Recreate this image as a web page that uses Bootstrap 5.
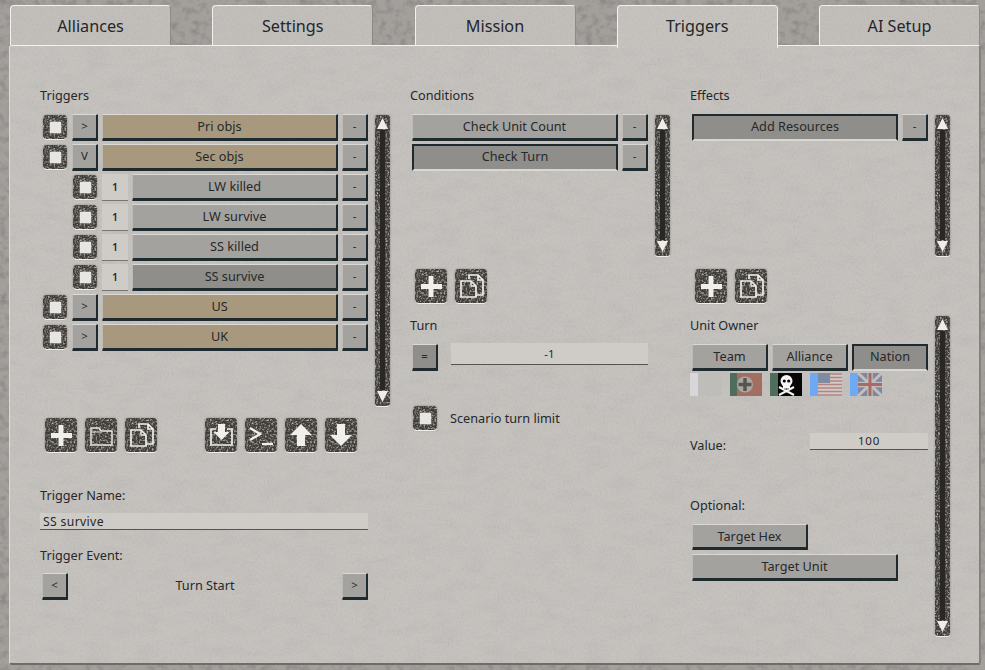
<!DOCTYPE html>
<html lang="en"><head><meta charset="utf-8"><title>Triggers</title>
<link href="https://cdn.jsdelivr.net/npm/bootstrap@5.3.0/dist/css/bootstrap.min.css" rel="stylesheet">
<style>
:root{
--noise:url("data:image/svg+xml,%3Csvg xmlns='http://www.w3.org/2000/svg' width='500' height='400'%3E%3Cfilter id='n'%3E%3CfeTurbulence type='fractalNoise' baseFrequency='.04 .09' numOctaves='5' seed='4'/%3E%3CfeColorMatrix values='0 0 0 0 .35 0 0 0 0 .34 0 0 0 0 .33 .3 0 0 0 -.12'/%3E%3C/filter%3E%3Crect width='500' height='400' filter='url(%23n)'/%3E%3C/svg%3E");
--grain:url("data:image/svg+xml,%3Csvg xmlns='http://www.w3.org/2000/svg' width='300' height='300'%3E%3Cfilter id='n'%3E%3CfeTurbulence type='fractalNoise' baseFrequency='.5' numOctaves='3' seed='9'/%3E%3CfeColorMatrix values='0 0 0 0 .3 0 0 0 0 .3 0 0 0 0 .3 .45 0 0 0 -.19'/%3E%3C/filter%3E%3Crect width='300' height='300' filter='url(%23n)'/%3E%3C/svg%3E");
--rough:url("data:image/svg+xml,%3Csvg xmlns='http://www.w3.org/2000/svg' width='300' height='300'%3E%3Cfilter id='n'%3E%3CfeTurbulence type='fractalNoise' baseFrequency='.14' numOctaves='4' seed='5'/%3E%3CfeColorMatrix values='0 0 0 0 .25 0 0 0 0 .24 0 0 0 0 .23 2 0 0 0 -.85'/%3E%3C/filter%3E%3Crect width='300' height='300' filter='url(%23n)'/%3E%3C/svg%3E");
--metal:url("data:image/svg+xml,%3Csvg xmlns='http://www.w3.org/2000/svg' width='120' height='120'%3E%3Cfilter id='n'%3E%3CfeTurbulence type='fractalNoise' baseFrequency='.55' numOctaves='2' seed='3'/%3E%3CfeColorMatrix values='0 0 0 0 .55 0 0 0 0 .54 0 0 0 0 .51 2.4 0 0 0 -1.08'/%3E%3C/filter%3E%3Crect width='120' height='120' filter='url(%23n)'/%3E%3C/svg%3E");
}
html,body{margin:0;background:#8f8c88}
body{width:985px;height:670px;overflow:hidden;font-family:"Noto Sans","Open Sans",sans-serif;color:#26282a;font-size:13px;line-height:18px}
.stage{width:985px;height:670px;padding:5px 4px 0 9px;background:var(--rough),#a3a09c}
.tabs{gap:41.25px;padding-left:1px;height:40px;position:relative;z-index:2}
.tab{width:161px;height:40px;border:0;border-top:1px solid #f2f1ef;border-left:1px solid #f2f1ef;border-right:1px solid #8d8a86;border-radius:4px 4px 0 0;background:var(--grain),#c2bfbb;font-size:16.2px;line-height:40px;padding:0;color:#24262a;text-align:center;text-decoration:none}
.tab.on{height:43px;background:var(--grain),#c6c3bf;border-right-color:#eeece9}
.panel{width:972px;height:620px;border-top:1px solid #f2f1ef;border-left:1px solid #dedcd8;border-right:2px solid #85827e;border-bottom:2px solid #6f6c68;border-radius:3px;background:var(--noise),var(--grain),#c6c3bf;padding:40px 0 0 30px;gap:20px}
.col-a{width:350px}.col-b{width:260px}
.lbl{height:18px;line-height:18px;font-size:12.7px;white-space:nowrap}
.listwrap{margin-top:8px}
.rows{flex:1 1 auto;min-width:0}
.r{height:30px;padding:2px 0 0 3px;gap:4px}
.r.sub{padding-left:33px}
.r.plain{padding-left:2px}
.r .metalbox{margin-right:1px}
.b{display:flex;align-items:center;justify-content:center;padding:0 0 1px;height:27px;background:#a4a29f;color:#26282a;border:0;border-top:1px solid #dcdad7;border-left:1px solid #bdbbb8;border-right:2px solid #1f2a2e;border-bottom:3px solid #1f2a2e;border-radius:1px;font-size:12.7px;line-height:1;white-space:nowrap;flex:0 0 auto}
.b.w{width:26px;font-size:11.5px}
.b.g{flex:1 1 auto;min-width:0}
.b.tan{background:#a8997e}
.b.sel{background:#8f8e8a;border:2px solid #1f2a2e;border-bottom:2px solid #d9d7d3;padding-bottom:3px}
.b.sel2{background:#8f8e8a}
.num{width:26px;height:27px;background:#cfccc8;border-bottom:1px solid #77756f;font-size:10.5px;font-weight:600;flex:0 0 auto}
.metalbox{background:var(--metal),#403d39;border-radius:4px;box-shadow:0 1px 0 #efeeec,0 0 2px rgba(60,58,55,.5)}
.chk{width:24px;height:24px;margin-top:1px;flex:0 0 auto}
.chk i{display:block;width:11px;height:11px;background:#e8e6e2;box-shadow:0 0 2px #ddd}
.sb{width:15px;flex:0 0 15px;margin-left:7px;margin-top:3px;border-radius:3px;overflow:hidden;padding:2px 0 3px}
.sb u{display:block;flex:1 1 auto;width:5px;background:#2a2826}
.sb svg{display:block;flex:0 0 auto}
.tools{gap:8px}
.ico{width:32px;height:34px;flex:0 0 auto;padding:0;border:0}
.ico svg{display:block}
.tools1{margin:12px 0 0 5px}
.tools2{margin:13px 0 0 5px}
.sp1{margin-left:40px}
.field{background:#cfccc8;border:0;border-bottom:1px solid #55534f;border-radius:0;text-align:center;font-size:11.5px;color:#26282a;box-shadow:none;padding:0}
.field:focus{background:#cfccc8;box-shadow:none;border-color:#55534f;color:#26282a}
.name{width:328px;height:17px;margin-top:9px;text-align:left;padding-left:3px;font-size:12.2px;letter-spacing:.35px;line-height:16px}
.mt-name{margin-top:34px}
.mt-ev{margin-top:16px}
.ev{width:328px;margin-top:9px;padding:0 0 0 2px;font-size:12.7px}
.ev span{padding-bottom:4px}
.turn{margin-top:10px;padding-left:2px;height:27px;width:238px}
.turn .field{flex:1 1 auto;margin-left:13px;height:22px;margin-top:-1px;width:auto}
.lim{margin-top:34px;padding-left:3px;gap:13px;font-size:12.7px}
.mt13{margin-top:13px}
.own{gap:4px;margin-top:10px;padding-left:2px}
.own .b{width:76px}
.flags{gap:8px;margin-top:2px}
.flags svg{display:block;flex:0 0 auto}
.val{width:238px;margin-top:36px}
.val .field{width:118px;height:17px;letter-spacing:.8px;line-height:16px;font-size:11.5px}
.opt{margin-top:46px}
.tg{margin-top:10px;padding-left:2px}
.tg .b{height:26px;padding-bottom:0}
.tg .h{width:116px}.tg .u{width:206px;margin-top:4px;height:27px}
.body3{width:260px}
.body3 .main{width:238px}
.scr-h{height:291px}.scr-s{height:141px}
.scr-3{height:320px;margin:0 0 0 7px}
</style></head><body>
<svg width="0" height="0" class="position-absolute"><defs>
<symbol id="i-plus" viewBox="0 0 32 34"><path d="M16 7v21M6 17.500h21" stroke="#f0efec" stroke-width="5" fill="none"/></symbol>
<symbol id="i-folder" viewBox="0 0 32 34"><path d="M6 27V10h8l2 3h11v14z" stroke="#e6e4e1" stroke-width="1.500" fill="none"/><path d="M6 14h9" stroke="#e6e4e1" stroke-width="1"/></symbol>
<symbol id="i-copy" viewBox="0 0 32 34"><path d="M14 10V6h9l5 5v15h-7M23 6v5h5" stroke="#f0efec" stroke-width="1.700" fill="none"/><path d="M6 12h10l5 5v11H6z" fill="none" stroke="#f0efec" stroke-width="1.700"/><path d="M16 12v5h5" stroke="#f0efec" stroke-width="1.300" fill="none"/></symbol>
<symbol id="i-imp" viewBox="0 0 32 34"><path d="M11 11H6v16h21V11h-5" stroke="#f0efec" stroke-width="1.700" fill="none"/><path d="M13 6h7v8h4.500l-8 8-8-8H13z" fill="#f0efec"/></symbol>
<symbol id="i-term" viewBox="0 0 32 34"><path d="M5 10l10 6-10 6" stroke="#f0efec" stroke-width="2.500" fill="none"/><path d="M17 26h11" stroke="#f0efec" stroke-width="2.200"/></symbol>
<symbol id="i-up" viewBox="0 0 32 34"><path d="M16 6l11 11h-7v11h-8V17H5z" fill="#f0efec"/></symbol>
<symbol id="i-down" viewBox="0 0 32 34"><path d="M12 6h8v11h7L16 28 5 17h7z" fill="#f0efec"/></symbol>
<symbol id="i-tu" viewBox="0 0 15 13"><path d="M7.500 1L13 12H2z" fill="#efedea"/></symbol>
<symbol id="i-td" viewBox="0 0 15 13"><path d="M7.500 12L13 1H2z" fill="#efedea"/></symbol>
</defs></svg>

<div class="stage">
<nav class="tabs d-flex">
<a class="tab" href="#">Alliances</a><a class="tab" href="#">Settings</a><a class="tab" href="#">Mission</a><a class="tab on" href="#">Triggers</a><a class="tab" href="#">AI Setup</a>
</nav>
<main class="panel d-flex">

<section class="col-a">
<div class="lbl">Triggers</div>
<div class="listwrap d-flex">
<div class="rows">
<div class="r d-flex"><span class="metalbox chk d-flex align-items-center justify-content-center"><i></i></span><button class="btn b w">&gt;</button><button class="btn b g tan">Pri objs</button><button class="btn b w">-</button></div>
<div class="r d-flex"><span class="metalbox chk d-flex align-items-center justify-content-center"><i></i></span><button class="btn b w">V</button><button class="btn b g tan">Sec objs</button><button class="btn b w">-</button></div>
<div class="r sub d-flex"><span class="metalbox chk d-flex align-items-center justify-content-center"><i></i></span><span class="num d-flex align-items-center justify-content-center">1</span><button class="btn b g">LW killed</button><button class="btn b w">-</button></div>
<div class="r sub d-flex"><span class="metalbox chk d-flex align-items-center justify-content-center"><i></i></span><span class="num d-flex align-items-center justify-content-center">1</span><button class="btn b g">LW survive</button><button class="btn b w">-</button></div>
<div class="r sub d-flex"><span class="metalbox chk d-flex align-items-center justify-content-center"><i></i></span><span class="num d-flex align-items-center justify-content-center">1</span><button class="btn b g">SS killed</button><button class="btn b w">-</button></div>
<div class="r sub d-flex"><span class="metalbox chk d-flex align-items-center justify-content-center"><i></i></span><span class="num d-flex align-items-center justify-content-center">1</span><button class="btn b g sel2">SS survive</button><button class="btn b w">-</button></div>
<div class="r d-flex"><span class="metalbox chk d-flex align-items-center justify-content-center"><i></i></span><button class="btn b w">&gt;</button><button class="btn b g tan">US</button><button class="btn b w">-</button></div>
<div class="r d-flex"><span class="metalbox chk d-flex align-items-center justify-content-center"><i></i></span><button class="btn b w">&gt;</button><button class="btn b g tan">UK</button><button class="btn b w">-</button></div>
</div>
<div class="sb scr-h metalbox d-flex flex-column align-items-center"><svg width="15" height="13"><use href="#i-tu"/></svg><u></u><svg width="15" height="13"><use href="#i-td"/></svg></div>
</div>
<div class="tools tools1 d-flex">
<button class="metalbox ico"><svg width="32" height="34"><use href="#i-plus"/></svg></button>
<button class="metalbox ico"><svg width="32" height="34"><use href="#i-folder"/></svg></button>
<button class="metalbox ico"><svg width="32" height="34"><use href="#i-copy"/></svg></button>
<button class="metalbox ico sp1"><svg width="32" height="34"><use href="#i-imp"/></svg></button>
<button class="metalbox ico"><svg width="32" height="34"><use href="#i-term"/></svg></button>
<button class="metalbox ico"><svg width="32" height="34"><use href="#i-up"/></svg></button>
<button class="metalbox ico"><svg width="32" height="34"><use href="#i-down"/></svg></button>
</div>
<div class="lbl mt-name">Trigger Name:</div>
<input class="form-control field name" value="SS survive" aria-label="Trigger name">
<div class="lbl mt-ev">Trigger Event:</div>
<div class="ev d-flex align-items-center justify-content-between"><button class="btn b w">&lt;</button><span>Turn Start</span><button class="btn b w">&gt;</button></div>
</section>

<section class="col-b">
<div class="lbl">Conditions</div>
<div class="listwrap d-flex">
<div class="rows">
<div class="r plain d-flex"><button class="btn b g">Check Unit Count</button><button class="btn b w">-</button></div>
<div class="r plain d-flex"><button class="btn b g sel">Check Turn</button><button class="btn b w">-</button></div>
</div>
<div class="sb scr-s metalbox d-flex flex-column align-items-center"><svg width="15" height="13"><use href="#i-tu"/></svg><u></u><svg width="15" height="13"><use href="#i-td"/></svg></div>
</div>
<div class="tools tools2 d-flex">
<button class="metalbox ico"><svg width="32" height="34"><use href="#i-plus"/></svg></button>
<button class="metalbox ico"><svg width="32" height="34"><use href="#i-copy"/></svg></button>
</div>
<div class="lbl mt13">Turn</div>
<div class="turn d-flex align-items-start"><button class="btn b w sel2">=</button><input class="form-control field" value="-1" aria-label="Turn"></div>
<div class="lim d-flex align-items-center"><span class="metalbox chk d-flex align-items-center justify-content-center"><i></i></span><span>Scenario turn limit</span></div>
</section>

<section class="col-b">
<div class="lbl">Effects</div>
<div class="listwrap d-flex">
<div class="rows">
<div class="r plain d-flex"><button class="btn b g sel">Add Resources</button><button class="btn b w">-</button></div>
</div>
<div class="sb scr-s metalbox d-flex flex-column align-items-center"><svg width="15" height="13"><use href="#i-tu"/></svg><u></u><svg width="15" height="13"><use href="#i-td"/></svg></div>
</div>
<div class="tools tools2 d-flex">
<button class="metalbox ico"><svg width="32" height="34"><use href="#i-plus"/></svg></button>
<button class="metalbox ico"><svg width="32" height="34"><use href="#i-copy"/></svg></button>
</div>
<div class="body3 d-flex mt13">
<div class="main">
<div class="lbl">Unit Owner</div>
<div class="own d-flex"><button class="btn b">Team</button><button class="btn b">Alliance</button><button class="btn b sel">Nation</button></div>
<div class="flags d-flex">
<svg width="32" height="23" viewBox="0 0 32 23"><rect width="8" height="23" fill="#d7d7da"/><rect x="8" width="24" height="23" fill="#bfbdba"/></svg>
<svg width="32" height="23" viewBox="0 0 32 23"><rect width="32" height="23" fill="#a26e62"/><rect width="7" height="23" fill="#4e6d5b"/><circle cx="15" cy="11.500" r="8" fill="#a9a7a2"/><path d="M15 5v13M8.500 11.500h13" stroke="#56564f" stroke-width="3.500"/></svg>
<svg width="32" height="23" viewBox="0 0 32 23"><rect width="32" height="23" fill="#060606"/><rect width="8" height="23" fill="#4e6d5b"/><path d="M9 14L24 22M9 22L24 14" stroke="#f5f5f5" stroke-width="2"/><circle cx="16.500" cy="8" r="6" fill="#f5f5f5"/><rect x="13" y="12" width="7" height="5" fill="#f5f5f5"/><circle cx="14.300" cy="8" r="1.600" fill="#060606"/><circle cx="18.700" cy="8" r="1.600" fill="#060606"/><path d="M15 15v2M16.500 15v2M18 15v2" stroke="#060606" stroke-width=".6"/></svg>
<svg width="32" height="23" viewBox="0 0 32 23"><rect width="8" height="23" fill="#6fa9f3"/><rect x="8" width="24" height="23" fill="#cfcbc7"/><path d="M8 1h24M8 4.500h24M8 8h24M8 11.500h24M8 15h24M8 18.500h24M8 22h24" stroke="#b58480" stroke-width="1.700"/><rect x="8" width="12" height="10" fill="#7f8aa3"/></svg>
<svg width="32" height="23" viewBox="0 0 32 23"><rect width="8" height="23" fill="#6fa9f3"/><rect x="8" width="24" height="23" fill="#7f88a0"/><path d="M8 0l24 23M32 0L8 23" stroke="#c2bebb" stroke-width="3"/><path d="M20 0v23M8 11.500h24" stroke="#c2bebb" stroke-width="5.500"/><path d="M20 0v23M8 11.500h24" stroke="#a86a66" stroke-width="3"/></svg>
</div>
<div class="val d-flex align-items-center justify-content-between"><span class="lbl pt-1">Value:</span><input class="form-control field" value="100" aria-label="Value"></div>
<div class="lbl opt">Optional:</div>
<div class="tg d-flex flex-column"><button class="btn b h">Target Hex</button><button class="btn b u">Target Unit</button></div>
</div>
<div class="sb scr-3 metalbox d-flex flex-column align-items-center"><svg width="15" height="13"><use href="#i-tu"/></svg><u></u><svg width="15" height="13"><use href="#i-td"/></svg></div>
</div>
</section>
</main>
</div>
<script src="https://cdn.jsdelivr.net/npm/bootstrap@5.3.0/dist/js/bootstrap.bundle.min.js"></script>
</body></html>
